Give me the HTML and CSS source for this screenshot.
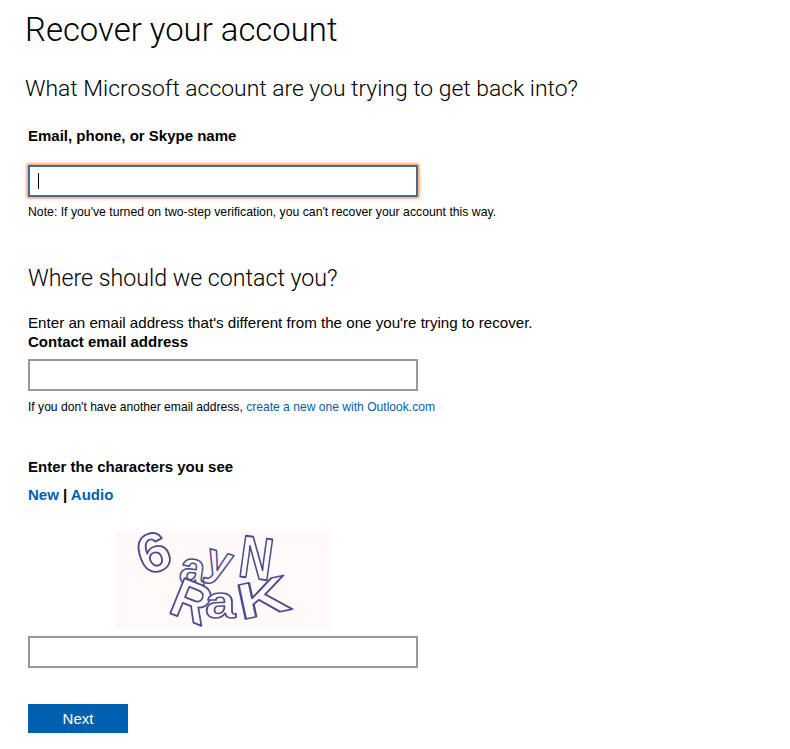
FILE: index.html
```html
<!DOCTYPE html>
<html lang="en">
<head>
    <meta charset="UTF-8">
    <meta name="viewport" content="width=device-width, initial-scale=1.0">
    <title>Recover your account</title>
    <link rel="stylesheet" href="styles.css">
</head>
<body>
    <h1 class="page-title">Recover your account</h1>
    <h2 class="page-subtitle">What Microsoft account are you trying to get back into?</h2>
    <div class="form">
        <label class="label label-account" for="account">Email, phone, or Skype name</label>
        <div class="input focused" id="account"><span class="caret"></span></div>
        <p class="note note-account">Note: If you've turned on two-step verification, you can't recover your account this way.</p>

        <h2 class="section-title">Where should we contact you?</h2>
        <p class="intro">Enter an email address that's different from the one you're trying to recover.</p>
        <label class="label label-contact" for="contact">Contact email address</label>
        <input class="input" id="contact" type="text">
        <p class="note note-contact">If you don't have another email address, <a href="#">create a new one with Outlook.com</a></p>

        <label class="label label-captcha" for="captcha">Enter the characters you see</label>
        <div class="captcha-links"><a href="#">New</a> | <a href="#">Audio</a></div>
        <div class="captcha-wrap">
            <svg class="captcha" viewBox="0 0 216 96" width="216" height="96" role="img" aria-label="captcha">
                <rect width="216" height="96" fill="#fff9f9"/>
                <g class="captcha-text">
                    <text transform="translate(30 44) rotate(-20) scale(1.25 1.2)">6</text>
                    <text transform="translate(63 50) rotate(8) scale(1 1)">a</text>
                    <text transform="translate(88 40) rotate(16)">y</text>
                    <text transform="translate(122 44) rotate(8) scale(1 1.3)">N</text>
                    <text transform="translate(52 80) rotate(22) scale(1.15 1.2)">R</text>
                    <text transform="translate(90 86) scale(1.2 1)">a</text>
                    <text transform="translate(126 88) rotate(-12) scale(1.6 1.1)">K</text>
                </g>
            </svg>
        </div>
        <input class="input" id="captcha" type="text">
        <button class="next" type="button">Next</button>
    </div>
</body>
</html>
```

FILE: styles.css
```css
body {
    margin: 0;
    background-color: white;
    color: black;
    font-family: "Liberation Sans", Arial, sans-serif;
    font-size: 15px;
}

h1, h2, p {
    margin: 0;
    font-weight: 300;
}

a {
    color: #0060b0;
    text-decoration: none;
}

.page-title {
    margin: 10px 0 0 25px;
    font-family: Roboto, sans-serif;
    font-size: 32.9px;
    line-height: 40px;
}

.page-subtitle {
    margin: 24px 0 0 25px;
    font-family: Roboto, sans-serif;
    font-size: 22.9px;
    line-height: 30px;
}

.form {
    width: 600px;
    margin-left: 28px;
}

.label {
    display: block;
    font-weight: bold;
    line-height: 18px;
}

.label-account {
    margin-top: 23px;
}

.input {
    display: block;
    box-sizing: border-box;
    width: 390px;
    height: 32px;
    margin: 0;
    padding: 0 8px;
    background-color: white;
    border: 2px solid #999;
    border-radius: 0;
    outline: none;
}

.focused {
    margin-top: 20px;
    display: flex;
    align-items: center;
    border-color: #4a6a94;
    box-shadow: 0 0 3px 1px #ee7f2d;
}

.caret {
    width: 1px;
    height: 16px;
    background-color: black;
}

.note {
    font-size: 12.1px;
    line-height: 14px;
}

.note-account {
    margin-top: 8px;
    font-size: 12.25px;
}

.section-title {
    margin-top: 44px;
    font-family: Roboto, sans-serif;
    font-size: 23.2px;
    line-height: 30px;
}

.intro {
    margin-top: 21px;
    font-weight: normal;
    font-size: 15.15px;
    line-height: 18px;
}

.label-contact {
    margin-top: 1px;
    margin-bottom: 8px;
}

.note-contact {
    margin-top: 9px;
}

.label-captcha {
    margin-top: 44px;
}

.captcha-links {
    margin-top: 10px;
    font-weight: bold;
    line-height: 18px;
}

.captcha-wrap {
    display: flex;
    justify-content: center;
    width: 390px;
    margin-top: 28px;
    margin-bottom: 8px;
}

.captcha {
    display: block;
}

.captcha-text text {
    font-family: "Liberation Sans", sans-serif;
    font-size: 46px;
    font-weight: bold;
    fill: #fff9f9;
    stroke: #4c4c8c;
    stroke-width: 1.5px;
    stroke-linejoin: round;
}

.next {
    display: block;
    width: 100px;
    height: 29px;
    margin-top: 36px;
    padding: 0;
    background-color: #0060b0;
    border: none;
    color: white;
    font-family: "Liberation Sans", Arial, sans-serif;
    font-size: 15px;
}
```
